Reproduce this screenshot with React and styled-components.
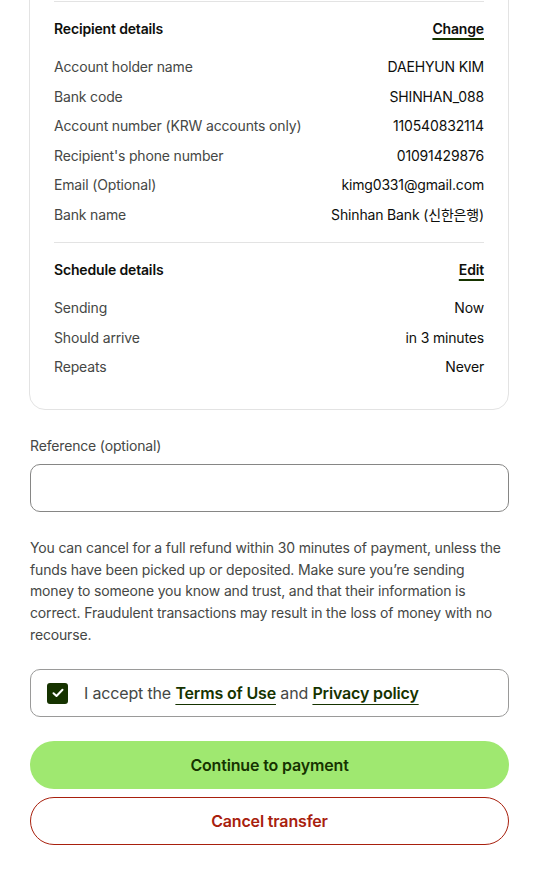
import React, { useState } from 'react'
import styled, { createGlobalStyle } from 'styled-components'

const GlobalStyle = createGlobalStyle`
html, body {
    margin: 0;
    padding: 0;
    background: #ffffff;
}
body {
    font-family: Inter, "Noto Sans", "Noto Sans CJK KR", sans-serif;
    color: #0e0f0c;
    letter-spacing: -0.01em;
    -webkit-font-smoothing: antialiased;
}
`

const Page = styled.div`
padding: 0 31px 40px 30px;
`

const Card = styled.div`
margin-top: -24px;
margin-left: -1px;
padding: 24px 24px 15px 24px;
border: 1px solid #e3e3e3;
border-radius: 16px;
`

const Divider = styled.div`
height: 1px;
background: #e3e3e3;
`

const Section = styled.section`
padding: 17px 0;
`

const SectionHeader = styled.div`
display: flex;
justify-content: space-between;
align-items: center;
margin-bottom: 18px;
`

const SectionTitle = styled.h3`
margin: 0;
font-size: 14px;
line-height: 20px;
font-weight: 600;
color: #0e0f0c;
`

const HeaderLink = styled.a`
font-size: 14px;
line-height: 20px;
font-weight: 600;
color: #0e0f0c;
text-decoration: underline;
text-decoration-color: #163300;
text-decoration-thickness: 2px;
text-underline-offset: 4px;
cursor: pointer;
`

const Rows = styled.div`
display: flex;
flex-direction: column;
gap: 9.6px;
`

const Row = styled.div`
display: flex;
justify-content: space-between;
font-size: 14px;
line-height: 20px;
`

const Label = styled.span`
color: #454745;
`

const Value = styled.span`
color: #0e0f0c;
text-align: right;
`

const Field = styled.div`
margin-top: 26px;
`

const FieldLabel = styled.label`
display: block;
font-size: 14px;
line-height: 20px;
color: #454745;
margin-bottom: 8px;
`

const Input = styled.input`
box-sizing: border-box;
width: 100%;
height: 48px;
border: 1px solid #868685;
border-radius: 10px;
padding: 0 16px;
font-family: inherit;
font-size: 16px;
outline: none;
`

const Notice = styled.p`
margin: 25px 0 0;
font-size: 14px;
line-height: 21.6px;
color: #454745;
`

const CheckRow = styled.label`
box-sizing: border-box;
display: flex;
align-items: center;
gap: 16px;
height: 48px;
margin-top: 24px;
padding: 0 16px;
border: 1px solid #9a9a99;
border-radius: 10px;
font-size: 16px;
color: #454745;
cursor: pointer;
`

const Box = styled.span`
display: grid;
place-items: center;
width: 21px;
height: 21px;
border-radius: 3px;
background: ${props => props.checked ? '#163300' : '#ffffff'};
border: ${props => props.checked ? 'none' : '1px solid #868685'};
flex-shrink: 0;
`

const TermLink = styled.a`
font-weight: 600;
color: #163300;
text-decoration: underline;
text-decoration-thickness: 1px;
text-underline-offset: 5px;
`

const Actions = styled.div`
display: flex;
flex-direction: column;
gap: 8px;
margin-top: 24px;
`

const Button = styled.button`
height: 48px;
border-radius: 24px;
font-family: inherit;
font-size: 16px;
font-weight: 600;
letter-spacing: -0.01em;
cursor: pointer;
border: ${props => props.danger ? '1px solid #a8200d' : 'none'};
background: ${props => props.danger ? '#ffffff' : '#9fe870'};
color: ${props => props.danger ? '#a8200d' : '#163300'};
`

const recipient = [
    { label: 'Account holder name', value: 'DAEHYUN KIM' },
    { label: 'Bank code', value: 'SHINHAN_088' },
    { label: 'Account number (KRW accounts only)', value: '110540832114' },
    { label: "Recipient's phone number", value: '01091429876' },
    { label: 'Email (Optional)', value: 'kimg0331@gmail.com' },
    { label: 'Bank name', value: 'Shinhan Bank (신한은행)' }
]

const schedule = [
    { label: 'Sending', value: 'Now' },
    { label: 'Should arrive', value: 'in 3 minutes' },
    { label: 'Repeats', value: 'Never' }
]

const DetailSection = ({ title, action, rows }) => (
    <Section>
        <SectionHeader>
            <SectionTitle>{title}</SectionTitle>
            <HeaderLink>{action}</HeaderLink>
        </SectionHeader>
        <Rows>
            {rows.map(el => (
                <Row key={el.label}>
                    <Label>{el.label}</Label>
                    <Value>{el.value}</Value>
                </Row>
            ))}
        </Rows>
    </Section>
)

const App = () => {
    const [accepted, setAccepted] = useState(true)

    return (
        <Page>
            <GlobalStyle />
            <Card>
                <Divider />
                <DetailSection title='Recipient details' action='Change' rows={recipient} />
                <Divider />
                <DetailSection title='Schedule details' action='Edit' rows={schedule} />
            </Card>

            <Field>
                <FieldLabel htmlFor='reference'>Reference (optional)</FieldLabel>
                <Input id='reference' />
            </Field>

            <Notice>
                You can cancel for a full refund within 30 minutes of payment, unless the funds have been picked up or deposited. Make sure you’re sending money to someone you know and trust, and that their information is correct. Fraudulent transactions may result in the loss of money with no recourse.
            </Notice>

            <CheckRow onClick={() => setAccepted(!accepted)}>
                <Box checked={accepted}>
                    {accepted && (
                        <svg width='12' height='10' viewBox='0 0 12 10' fill='none'>
                            <path d='M1.5 5.2 L4.5 8 L10.5 1.8' stroke='#ffffff' strokeWidth='2' strokeLinecap='round' strokeLinejoin='round' />
                        </svg>
                    )}
                </Box>
                <span>
                    I accept the <TermLink>Terms of Use</TermLink> and <TermLink>Privacy policy</TermLink>
                </span>
            </CheckRow>

            <Actions>
                <Button>Continue to payment</Button>
                <Button danger>Cancel transfer</Button>
            </Actions>
        </Page>
    )
}

export default App
